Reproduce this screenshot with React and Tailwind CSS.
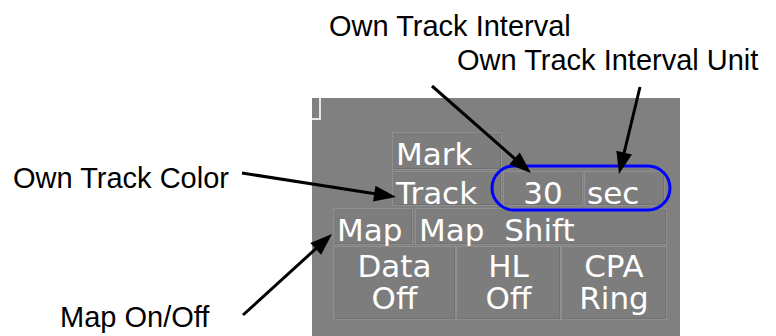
const ARROWS = [
  { from: [432, 86], to: [531, 173] },
  { from: [640, 87], to: [619, 174] },
  { from: [242, 173], to: [396, 197] },
  { from: [243, 315], to: [332, 234] },
];

function arrowHead([x1, y1], [x2, y2]) {
  const len = 22;
  const half = 8;
  const dx = x2 - x1;
  const dy = y2 - y1;
  const d = Math.hypot(dx, dy);
  const ux = dx / d;
  const uy = dy / d;
  const bx = x2 - ux * len;
  const by = y2 - uy * len;
  return `${x2},${y2} ${bx - uy * half},${by + ux * half} ${bx + uy * half},${by - ux * half}`;
}

function Key({ className = '', children }) {
  return (
    <div
      className={`border border-[#8f8f8f] shadow-[inset_-1px_-1px_0_#727272] bg-[#7d7d7d] text-white leading-[32px] ${className}`}
    >
      {children}
    </div>
  );
}

export default function App() {
  return (
    <div className="relative w-[776px] h-[336px] overflow-hidden bg-white">
      {/* Panel */}
      <div
        className="ml-[312px] mt-[98px] w-[368px] h-[238px] bg-[#808080] pl-[21px]"
        style={{ fontFamily: '"DejaVu Sans", sans-serif', fontSize: 31 }}
      >
        <div className="-ml-[21px] w-[9px] h-[22px] border-r-2 border-b-2 border-[#e8e8e8]" />

        <div className="mt-[12px] ml-[59px] w-[110px]">
          <Key className="h-[38px] pt-[5px] pl-[3px]">Mark</Key>
        </div>

        <div className="mt-[1px] ml-[59px] flex">
          <Key className="w-[110px] h-[35px] pt-[5px] pl-[3px]">Track</Key>
          <Key className="ml-px w-[80px] h-[35px] pt-[5px] text-center">30</Key>
          <Key className="ml-px w-[81px] h-[35px] pt-[5px] pl-[2px]">sec</Key>
        </div>

        <div className="mt-[2px] flex">
          <Key className="w-[80px] h-[37px] pt-[5px] pl-[3px]">Map</Key>
          <Key className="ml-[2px] w-[252px] h-[37px] pt-[5px] pl-[3px] whitespace-pre">Map  Shift</Key>
        </div>

        <div className="mt-px flex">
          <Key className="w-[123px] h-[74px] pt-[3px] text-center">
            <div>Data</div>
            <div>Off</div>
          </Key>
          <Key className="w-[105px] h-[74px] pt-[3px] text-center">
            <div>HL</div>
            <div>Off</div>
          </Key>
          <Key className="w-[106px] h-[74px] pt-[3px] text-center">
            <div>CPA</div>
            <div>Ring</div>
          </Key>
        </div>
      </div>

      {/* Callout labels */}
      <div
        className="absolute inset-0 text-black text-[29px] leading-[29px]"
        style={{ fontFamily: '"Liberation Sans", Arial, sans-serif' }}
      >
        <div className="absolute left-[329px] top-[12px] whitespace-nowrap">Own Track Interval</div>
        <div className="absolute left-[457px] top-[46px] whitespace-nowrap">Own Track Interval Unit</div>
        <div className="absolute left-[13px] top-[164px] whitespace-nowrap">Own Track Color</div>
        <div className="absolute left-[60px] top-[303px] whitespace-nowrap">Map On/Off</div>
      </div>

      {/* Arrows and highlight ring */}
      <svg className="absolute inset-0" width="776" height="336" viewBox="0 0 776 336">
        <rect x="492" y="166" width="178" height="44" rx="22" fill="none" stroke="#0000ff" strokeWidth="3" />
        {ARROWS.map((a, i) => {
          const [x1, y1] = a.from;
          const [x2, y2] = a.to;
          const d = Math.hypot(x2 - x1, y2 - y1);
          const ex = x2 - ((x2 - x1) / d) * 18;
          const ey = y2 - ((y2 - y1) / d) * 18;
          return (
            <g key={i}>
              <line x1={x1} y1={y1} x2={ex} y2={ey} stroke="#000" strokeWidth="3" />
              <polygon points={arrowHead(a.from, a.to)} fill="#000" />
            </g>
          );
        })}
      </svg>
    </div>
  );
}
